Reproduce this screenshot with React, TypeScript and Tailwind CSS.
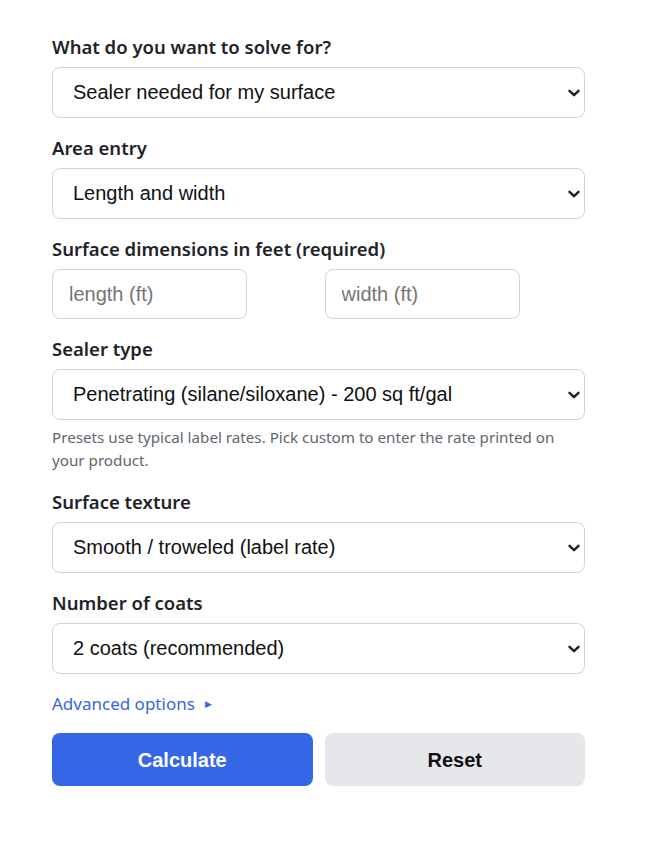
import React from "react";

const label = "block text-[18.5px] leading-6 font-semibold text-[#1f2329] mb-2";
const control =
  "rounded-lg border border-[#cfd4dc] bg-white text-[#111] outline-none";
const arial = { fontFamily: '"Liberation Sans", Arial, sans-serif' };

function Chevron() {
  return (
    <svg
      viewBox="0 0 12 8"
      className="pointer-events-none absolute right-[5px] top-1/2 -translate-y-1/2 w-3 h-2"
      fill="none"
      stroke="#222"
      strokeWidth="2.4"
      strokeLinecap="round"
      strokeLinejoin="round"
    >
      <path d="M1.5 1.8 6 6.2l4.5-4.4" />
    </svg>
  );
}

function Select({ value, options }: { value: string; options: string[] }) {
  return (
    <div className="relative">
      <select
        defaultValue={value}
        className={`${control} w-full h-[51px] text-[20px] appearance-none pl-5 pr-10 pb-[2px]`}
        style={arial}
      >
        {options.map((o) => (
          <option key={o}>{o}</option>
        ))}
      </select>
      <Chevron />
    </div>
  );
}

function Field({ title, children }: { title: string; children: React.ReactNode }) {
  return (
    <div className="mb-[18px]">
      <label className={label}>{title}</label>
      {children}
    </div>
  );
}

export default function App() {
  return (
    <div
      className="min-h-screen bg-white px-[52px] pt-[35px]"
      style={{ fontFamily: '"Noto Sans", "Open Sans", sans-serif' }}
    >
      <div className="w-[533px]">
        <Field title="What do you want to solve for?">
          <Select
            value="Sealer needed for my surface"
            options={["Sealer needed for my surface", "Area a product will cover"]}
          />
        </Field>

        <Field title="Area entry">
          <Select value="Length and width" options={["Length and width", "Total square feet"]} />
        </Field>

        <Field title="Surface dimensions in feet (required)">
          <div className="grid grid-cols-2 gap-3">
            <input
              placeholder="length (ft)"
              className={`${control} w-[195px] h-[50px] px-4 text-[20px] placeholder:text-[#767676]`}
              style={arial}
            />
            <input
              placeholder="width (ft)"
              className={`${control} w-[195px] h-[50px] px-4 text-[20px] placeholder:text-[#767676]`}
              style={arial}
            />
          </div>
        </Field>

        <Field title="Sealer type">
          <Select
            value="Penetrating (silane/siloxane) - 200 sq ft/gal"
            options={[
              "Penetrating (silane/siloxane) - 200 sq ft/gal",
              "Acrylic (solvent-based) - 250 sq ft/gal",
              "Custom rate",
            ]}
          />
          <p className="mt-[6px] text-[15.2px] leading-[23px] text-[#5f6670]">
            Presets use typical label rates. Pick custom to enter the rate printed on your product.
          </p>
        </Field>

        <Field title="Surface texture">
          <Select
            value="Smooth / troweled (label rate)"
            options={["Smooth / troweled (label rate)", "Broom finish", "Rough / exposed aggregate"]}
          />
        </Field>

        <Field title="Number of coats">
          <Select value="2 coats (recommended)" options={["1 coat", "2 coats (recommended)", "3 coats"]} />
        </Field>

        <div className="mt-[18px] flex items-center gap-[10px] text-[17px] leading-6 text-[#3566e5]">
          <span>Advanced options</span>
          <span className="text-[9px]">▶</span>
        </div>

        <div className="mt-[17px] grid grid-cols-2 gap-3" style={arial}>
          <button className="h-[53px] rounded-lg bg-[#3566e5] text-[20px] font-bold text-white">
            Calculate
          </button>
          <button className="h-[53px] rounded-lg bg-[#e5e7eb] text-[20px] font-bold text-[#111]">
            Reset
          </button>
        </div>
      </div>
    </div>
  );
}
